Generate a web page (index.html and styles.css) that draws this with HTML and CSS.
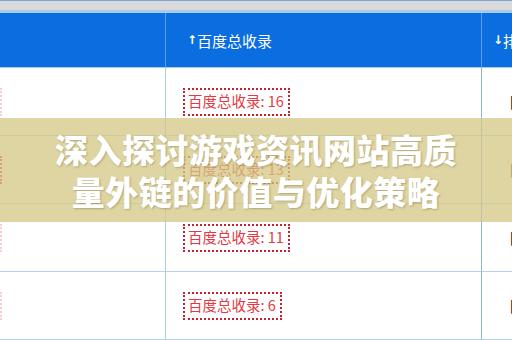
FILE: index.html
```html
<!DOCTYPE html>
<html lang="zh">
<head>
<meta charset="utf-8">
<link rel="stylesheet" href="styles.css">
</head>
<body>
<div class="page">
  <div class="topbar"></div>
  <div class="table">
    <div class="th th1"></div>
    <div class="th th2"><span class="arrow">↑</span>百度总收录</div>
    <div class="th th3"><span class="arrow">↓</span>排名</div>

    <div class="td td1"><span class="edge"></span></div>
    <div class="td td2"><span class="badge">百度总收录: 16</span></div>
    <div class="td td3">目前</div>

    <div class="td td1"><span class="edge edge-strong"></span></div>
    <div class="td td2"><span class="badge">百度总收录: 13</span></div>
    <div class="td td3">目前</div>

    <div class="td td1"><span class="edge"></span></div>
    <div class="td td2"><span class="badge">百度总收录: 11</span></div>
    <div class="td td3">目前</div>

    <div class="td td1"><span class="edge"></span></div>
    <div class="td td2"><span class="badge">百度总收录: 6</span></div>
    <div class="td td3">目前</div>
  </div>
  <div class="band">
    <h1 class="title">深入探讨游戏资讯网站高质<br>量外链的价值与优化策略</h1>
  </div>
</div>
</body>
</html>
```

FILE: styles.css
```css
* { box-sizing: border-box; margin: 0; padding: 0; }
html, body { width: 512px; height: 340px; overflow: hidden; background: #fff; }
body { font-family: "Noto Sans CJK SC", "Noto Sans", sans-serif; }
.page { position: relative; width: 512px; height: 340px; overflow: hidden; }

.topbar {
  height: 13px;
  background: #dadada;
  border-top: 1px solid #7aa4e2;
  border-bottom: 3px solid #a8cbef;
}

.table {
  display: grid;
  grid-template-columns: 166px 316px 1fr;
  grid-template-rows: 55px repeat(4, 68px);
}

.th {
  background: #0a6ee0;
  color: #fff;
  font-size: 15px;
  display: flex;
  align-items: center;
  border-bottom: 1px solid #a7caef;
  border-right: 1px solid #5d9ce6;
  white-space: nowrap;
  overflow: hidden;
}
.th2 { padding-left: 21px; }
.th3 { padding-left: 11px; border-right: none; }
.arrow { font-family: "DejaVu Sans", sans-serif; font-weight: bold; font-size: 12px; margin-right: 0; }

.td {
  display: flex;
  align-items: center;
  border-bottom: 1px solid #b3d1f1;
  border-right: 1px solid #a9cbee;
  white-space: nowrap;
  overflow: hidden;
}
.td2 { padding-left: 17px; border-right-color: #8fb4ea; }
.td3 { padding-left: 27px; border-right: none; color: #3a3a3a; font-size: 15px; font-weight: bold; }

.edge {
  width: 2px;
  height: 28px;
  border-right: 2px dotted #e0606a;
  opacity: 0.3;
}
.edge-strong { opacity: 1; border-right-color: #d03040; }

.badge {
  display: inline-flex;
  align-items: center;
  height: 28px;
  padding: 0 4px 0 3px;
  border: 2px dotted #c8202f;
  color: #e23a44;
  font-size: 14.5px;
  line-height: 1;
}

.band {
  position: absolute;
  left: 0;
  top: 118px;
  width: 512px;
  height: 104px;
  background: rgba(212, 199, 132, 0.75);
  display: flex;
  align-items: center;
  justify-content: center;
}
.title {
  color: #fff;
  font-family: "Noto Sans CJK SC", sans-serif;
  font-weight: 900;
  font-size: 33px;
  line-height: 42px;
  letter-spacing: 0.5px;
  text-align: center;
  text-shadow: 1px 1px 2px rgba(90, 80, 40, 0.35);
}
```
